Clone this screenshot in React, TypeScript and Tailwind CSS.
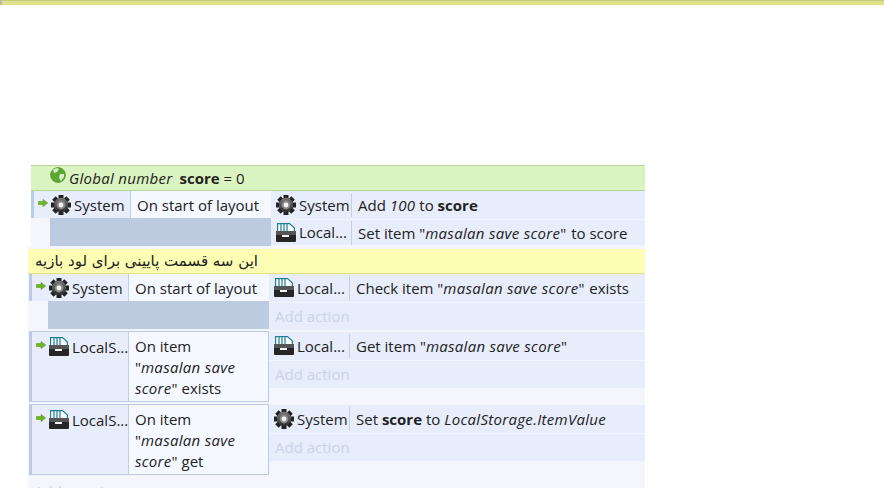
import type { ReactNode } from "react";

const Gear = () => (
  <svg width="20" height="20" viewBox="0 0 20 20" className="shrink-0">
    <defs>
      <linearGradient id="gearBody" x1="0" y1="0" x2="0" y2="1">
        <stop offset="0" stopColor="#7a7a7a" />
        <stop offset="1" stopColor="#2a2a2a" />
      </linearGradient>
    </defs>
    <g fill="#222">
      <rect x="7.500" y="0" width="5" height="20" />
      <rect x="0" y="7.500" width="20" height="5" />
      <rect x="7.500" y="0" width="5" height="20" transform="rotate(45 10 10)" />
      <rect x="7.500" y="0" width="5" height="20" transform="rotate(-45 10 10)" />
    </g>
    <circle cx="10" cy="10" r="7.200" fill="url(#gearBody)" />
    <circle cx="10" cy="10" r="4.400" fill="#8a8a8a" />
    <circle cx="10" cy="10" r="2.400" fill="#f4f4f4" />
  </svg>
);

const Disk = () => (
  <svg width="20" height="20" viewBox="0 0 20 20" className="shrink-0">
    <path fill="#fbfdfd" stroke="#1f7f92" strokeWidth="1.200" d="M1.600 9V.6h12l4.800 4.400V9" />
    <path stroke="#1f7f92" strokeWidth="1.200" d="M5 1v8M8 1v8M11 1v8" fill="none" />
    <rect x="0" y="8" width="20" height="11" rx="1" fill="#262626" />
    <rect x="0" y="8" width="20" height="4" fill="#555" />
    <rect x="6" y="12" width="7" height="2" fill="#f4f4f4" />
  </svg>
);

const Arrow = () => (
  <svg width="10" height="8" viewBox="0 0 10 8" className="shrink-0 mt-[4px]">
    <path fill="#6fb524" stroke="#4d8c14" strokeWidth=".5" d="M.3 2.500h4.700V.4L9.700 4 5 7.600V5.500H.3z" />
  </svg>
);

const Globe = () => (
  <svg width="16" height="16" viewBox="0 0 16 16" className="shrink-0 mb-[6px]">
    <circle cx="8" cy="8" r="7.500" fill="#5aa832" stroke="#468a24" strokeWidth=".6" />
    <path fill="#dcefcc" d="M3 3c2-2 5-2 6-1L7 5 4 6zM10 7l4 0 0 3-3 4-2-3z" />
  </svg>
);

const Icon = ({ kind }: { kind: string }) => (kind === "gear" ? <Gear /> : <Disk />);

const It = ({ children }: { children: ReactNode }) => <i className="tracking-[.3px]">{children}</i>;

const Action = ({ icon, name, children, first, short }: { icon: string; name: string; children: ReactNode; first?: boolean; short?: boolean }) => (
  <div className={`flex items-center bg-[#e7edfa] ${short ? "h-[26px]" : "h-[28px]"} ${first ? "" : "border-t border-[#f2f5fd]"}`}>
    <div className="w-[80px] pl-[5px] flex items-center gap-[3px] shrink-0">
      <Icon kind={icon} />
      <span>{name}</span>
    </div>
    <div className="h-[24px] leading-[24px] border-l border-[#c3cfe3] pl-[6px] whitespace-nowrap">{children}</div>
  </div>
);

const AddAction = () => (
  <div className="h-[28px] flex items-center bg-[#e7edfa] border-t border-[#f2f5fd] pl-[6px] text-[#c9d4e8]">Add action</div>
);

const Cond = ({ icon, name, tall, children }: { icon: string; name: string; tall?: boolean; children: ReactNode }) => (
  <div className={`flex w-full ${tall ? "h-[71px] border border-[#bccbe3] border-l-[3px]" : "h-[27px] border-l-[3px] border-[#bccbe3]"}`}>
    <div className={`w-[96px] shrink-0 flex items-start gap-[3px] bg-[#e7edfa] pl-[4px] ${tall ? "pt-[5px]" : "pt-[4px]"}`}>
      <Arrow />
      <Icon kind={icon} />
      <span className="leading-[20px]">{name}</span>
    </div>
    <div className="flex-1 bg-[#f5f8ff] border-l border-[#c3cfe3] pl-[6px] pt-[4px] leading-[21px] whitespace-nowrap">{children}</div>
  </div>
);

const GrayBlock = () => <div className="ml-[19px] h-[28px] bg-[#bccbe0]"></div>;

export default function App() {
  return (
    <div className="w-[884px] h-[488px] overflow-hidden bg-white text-[15px] text-[#222] font-['Open_Sans','Noto_Sans',sans-serif]">
      <div className="h-[5px] bg-[#e0e088] border-t border-[#c9c98a] border-l-2 border-l-[#b9b9a0]"></div>

      <div className="w-[617px] ml-[28px] mt-[160px]">
        <div className="ml-[3px] bg-[#f4f6fc]">
          <div className="h-[26px] flex items-center bg-[#dbf3c0] border-y border-[#b7d6a0] pl-[19px] gap-[3px]">
            <Globe />
            <span className="whitespace-nowrap"><It>Global number</It> <b className="ml-[3px]">score</b> = 0</span>
          </div>

          <div className="flex">
            <div className="w-[240px] shrink-0">
              <Cond icon="gear" name="System">On start of layout</Cond>
              <GrayBlock />
            </div>
            <div className="flex-1">
              <Action first icon="gear" name="System">Add <It>100</It> to <b>score</b></Action>
              <Action short icon="disk" name="Local...">Set item "<It>masalan save score</It>" <span className="ml-[1px]">to score</span></Action>
            </div>
          </div>
        </div>

        <div className="bg-[#f4f6fc] pt-[3px] pb-[20px]">
          <div className="h-[25px] flex items-center bg-[#fdfdb4] border-b border-[#e0e088] pl-[7px] font-['DejaVu_Sans',sans-serif]">
            <span dir="rtl">این سه قسمت پایینی برای لود بازیه</span>
          </div>

          <div className="ml-[1px] flex">
            <div className="w-[240px] shrink-0">
              <Cond icon="gear" name="System">On start of layout</Cond>
              <GrayBlock />
            </div>
            <div className="flex-1">
              <Action first icon="disk" name="Local...">Check item "<It>masalan save score</It>" <span className="ml-[1px]">exists</span></Action>
              <AddAction />
            </div>
          </div>

          <div className="ml-[1px] mt-[1px] flex">
            <div className="w-[240px] shrink-0">
              <Cond tall icon="disk" name="LocalS...">On item<br />"<It>masalan save<br />score</It>" exists</Cond>
            </div>
            <div className="flex-1 pt-[1px]">
              <Action first icon="disk" name="Local...">Get item "<It>masalan save score</It>"</Action>
              <AddAction />
            </div>
          </div>

          <div className="ml-[1px] mt-[2px] flex">
            <div className="w-[240px] shrink-0">
              <Cond tall icon="disk" name="LocalS...">On item<br />"<It>masalan save<br />score</It>" get</Cond>
            </div>
            <div className="flex-1 pt-[1px]">
              <Action first icon="gear" name="System">Set <b>score</b> to <It>LocalStorage.ItemValue</It></Action>
              <AddAction />
            </div>
          </div>

          <div className="ml-[6px] mt-[5px] text-[#c9d4e8]">Add event</div>
        </div>
      </div>
    </div>
  );
}
